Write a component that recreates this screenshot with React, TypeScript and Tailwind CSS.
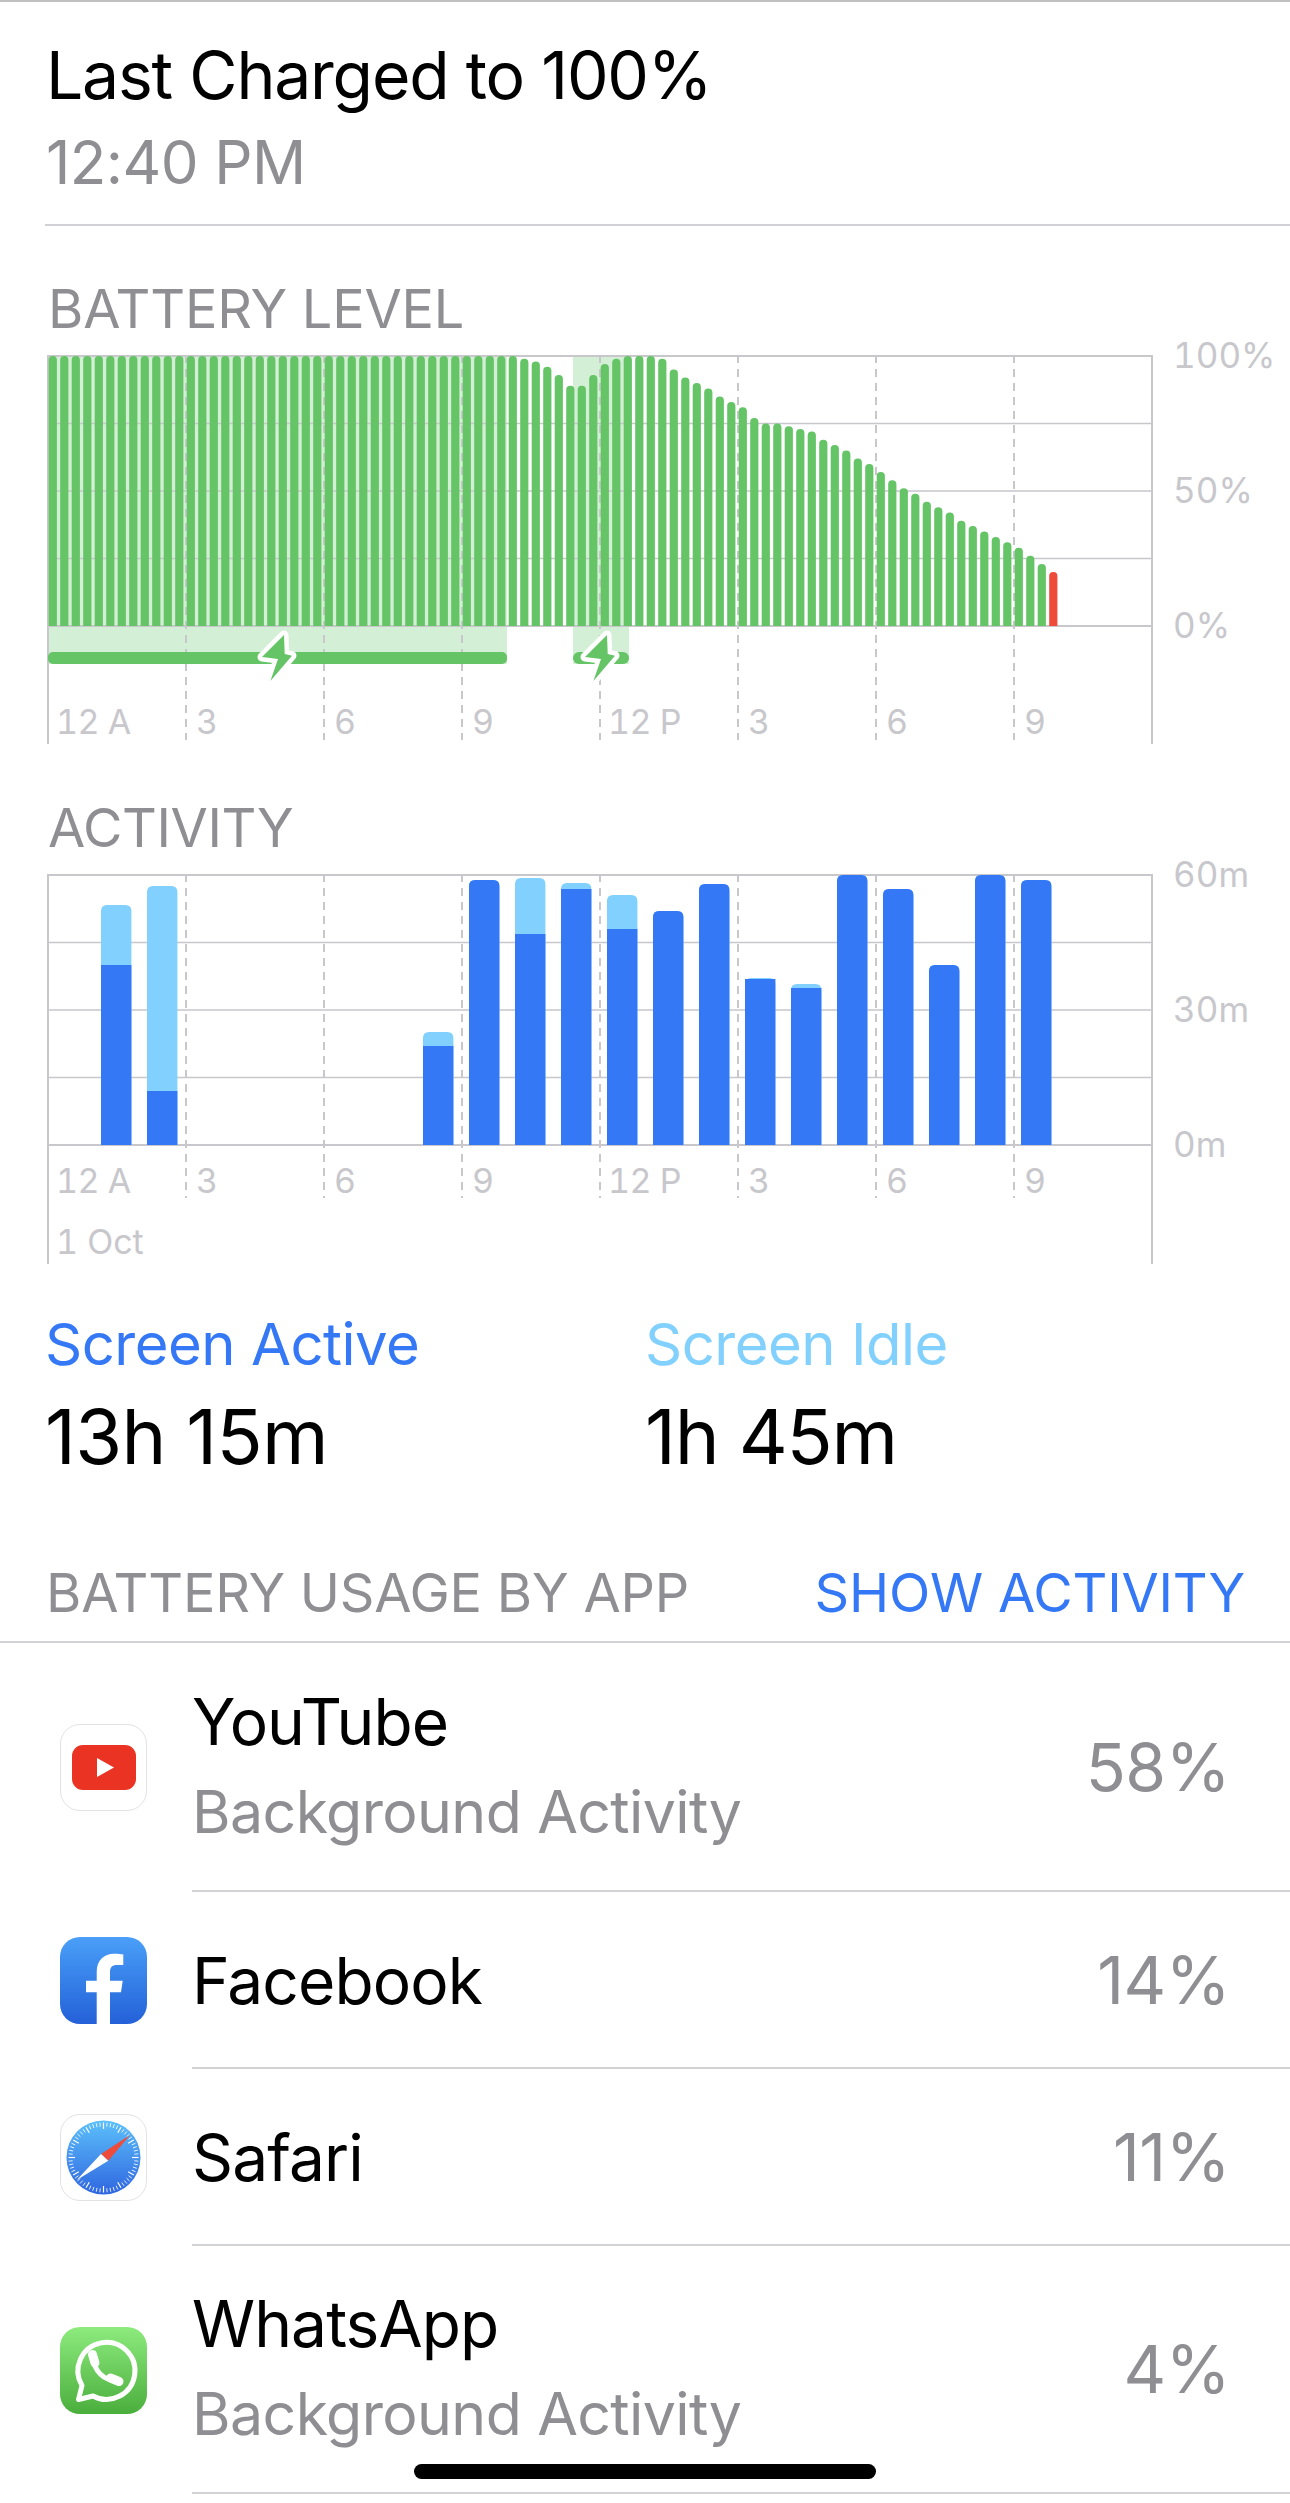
import React from 'react';

const LINE = '#c7c7cc';
const GREEN = '#65c466';

// battery level per 15 min slot, the first 41 slots sit at 100%
const LEVELS = [
  ...Array(41).fill(100),
  99, 98, 96, 93, 89, 89, 93, 97, 99, 100, 100, 100, 99, 95, 92, 90, 88, 85, 83, 81, 77, 75, 75, 74, 73, 72,
  69, 67, 65, 62, 60, 57, 54, 51, 49, 46, 44, 42, 39, 37, 35, 33, 31, 29, 26, 23, 20,
];

// hour, total height, active height (px of a 270px plot)
const ACTIVITY = [
  [1, 240, 180], [2, 259, 54], [8, 113, 99], [9, 265, 265], [10, 267, 211], [11, 262, 256], [12, 250, 216],
  [13, 234, 234], [14, 261, 261], [15, 167, 166], [16, 161, 157], [17, 270, 270], [18, 256, 256], [19, 180, 180],
  [20, 270, 270], [21, 265, 265],
];

const topBar = (x: number, top: number, bottom: number, w: number, r: number) =>
  `M${x} ${bottom}V${top + r}Q${x} ${top} ${x + r} ${top}H${x + w - r}Q${x + w} ${top} ${x + w} ${top + r}V${bottom}Z`;

const Grid: React.FC<{ bottom: number; dashEnd: number }> = ({ bottom, dashEnd }) => (
  <>
    {[0, 67.5, 135, 202.5, 270].map((y) => (
      <line key={y} x1={0} x2={1104} y1={y + 1} y2={y + 1} stroke={LINE} strokeWidth={y === 0 || y === 270 ? 2 : 1.5} />
    ))}
    {[138, 276, 414, 552, 690, 828, 966].map((x) => (
      <line key={x} x1={x + 1} x2={x + 1} y1={0} y2={dashEnd} stroke={LINE} strokeWidth={2} strokeDasharray="8 6" />
    ))}
    <line x1={1} x2={1} y1={0} y2={bottom} stroke={LINE} strokeWidth={2} />
    <line x1={1105} x2={1105} y1={0} y2={bottom} stroke={LINE} strokeWidth={2} />
  </>
);

const Bolt: React.FC<{ dx: number }> = ({ dx }) => (
  <path
    transform={`translate(${dx} 0)`}
    d="M237 280 L215 302 L231 304 L223.400 326 L245 300.700 L237.700 299 Z"
    fill={GREEN}
    stroke="#ffffff"
    strokeWidth={9}
    strokeLinejoin="round"
    paintOrder="stroke"
  />
);

const BatteryPlot = () => (
  <svg width={1106} height={390} viewBox="0 0 1106 390" className="block">
    <path d="M1 0H460V309H1Z" fill="#d3efd6" />
    <path d="M526 0H582V309H526Z" fill="#d3efd6" />
    <Grid bottom={389} dashEnd={385} />
    {LEVELS.map((level, i) => {
      const top = 271 - level * 2.7;
      return (
        <path key={i} d={topBar(1.7 + i * 11.5, top, 271, 8.2, 4)} fill={i === LEVELS.length - 1 ? '#ef4b3a' : GREEN} />
      );
    })}
    <rect x={1} y={297} width={459} height={12} rx={5} fill={GREEN} />
    <rect x={526} y={297} width={56} height={12} rx={6} fill={GREEN} />
    <Bolt dx={0} />
    <Bolt dx={323} />
  </svg>
);

const ActivityPlot = () => (
  <svg width={1106} height={390} viewBox="0 0 1106 390" className="block">
    <Grid bottom={390} dashEnd={324} />
    {ACTIVITY.map(([h, total, active]) => {
      const x = 8 + h * 46;
      return (
        <g key={h}>
          <path d={topBar(x, 271 - total, 271, 30.4, 6)} fill="#81d0fe" />
          {active === total ? (
            <path d={topBar(x, 271 - total, 271, 30.4, 6)} fill="#3478f6" />
          ) : (
            <rect x={x} y={271 - active} width={30.4} height={active} fill="#3478f6" />
          )}
        </g>
      );
    })}
  </svg>
);

const XLabels: React.FC<{ className: string }> = ({ className }) => (
  <div className={`absolute left-0 grid grid-cols-[repeat(8,138px)] text-[34px] leading-[40px] tracking-[-0.5px] tabular-nums text-[#c7c7cc] ${className}`}>
    {['12 A', '3', '6', '9', '12 P', '3', '6', '9'].map((label, i) => (
      <span key={i} className={i === 0 || i === 4 ? 'pl-[9px]' : 'pl-[11px]'}>
        {label}
      </span>
    ))}
  </div>
);

const YLabels: React.FC<{ labels: string[] }> = ({ labels }) => (
  <div className="ml-[20px] flex h-[270px] flex-col justify-between text-[35px] tabular-nums text-[#c7c7cc]">
    {labels.map((label) => (
      <span key={label} className="flex h-0 items-center leading-none">
        {label}
      </span>
    ))}
  </div>
);

const YouTubeIcon = () => (
  <div className="flex h-[87px] w-[87px] items-center justify-center rounded-[20px] border border-[#e2e2e2] bg-white">
    <svg width={64} height={45} viewBox="0 0 64 45">
      <rect width={64} height={45} rx={11} fill="#ea3323" />
      <path d="M25 13V32L42 22.500Z" fill="#fff" />
    </svg>
  </div>
);

const FacebookIcon = () => (
  <div className="h-[87px] w-[87px] overflow-hidden rounded-[20px] bg-gradient-to-b from-[#4a9ff8] to-[#2560d8]">
    <svg width={87} height={87} viewBox="0 0 87 87">
      <path
        d="M36.700 87V55.300H26V43.700H36.700V35C36.700 23 44 16.700 54 16.700C58 16.700 61.500 17 63.300 17.500V28H57C52 28 50 30.500 50 35V43.700H62.700L61 55.300H50V87Z"
        fill="#fff"
      />
    </svg>
  </div>
);

const SafariIcon = () => (
  <div className="h-[87px] w-[87px] rounded-[20px] border border-[#e2e2e2] bg-white">
    <svg width={85} height={85} viewBox="0 0 85 85">
      <defs>
        <linearGradient id="safari" x1="0" y1="0" x2="0" y2="1">
          <stop offset="0" stopColor="#5cc0fa" />
          <stop offset="1" stopColor="#2f66e0" />
        </linearGradient>
      </defs>
      <circle cx={42.5} cy={42.5} r={37} fill="url(#safari)" />
      {Array.from({ length: 60 }).map((_, i) => (
        <line
          key={i}
          x1={42.5}
          x2={42.5}
          y1={7.500}
          y2={i % 5 === 0 ? 14 : 11.500}
          stroke="#fff"
          strokeWidth={i % 5 === 0 ? 1.200 : 0.800}
          transform={`rotate(${i * 6} 42.500 42.500)`}
        />
      ))}
      <path d="M69 20L47.300 45.700L40 39Z" fill="#ef4b3a" />
      <path d="M15.700 65L40 39L47.300 45.700Z" fill="#fff" />
    </svg>
  </div>
);

const WhatsAppIcon = () => (
  <div className="h-[87px] w-[87px] overflow-hidden rounded-[20px] bg-gradient-to-b from-[#8ceb7c] to-[#4aae3c]">
    <svg width={87} height={87} viewBox="0 0 87 87" fill="none">
      <path
        d="M22 58.500A28.500 28.500 0 1 1 33 69L18.500 72.500L22 58.500Z"
        stroke="#fff"
        strokeWidth={5}
        strokeLinejoin="round"
      />
      <path d="M34 32C34 44 44 53.500 56 53.500" stroke="#fff" strokeWidth={5} strokeLinecap="round" />
      <path d="M32.500 27.500L35 36M50.500 51L59 54.500" stroke="#fff" strokeWidth={9} strokeLinecap="round" />
    </svg>
  </div>
);

const AppRow: React.FC<{
  icon: React.ReactNode;
  name: string;
  sub?: boolean;
  percent: string;
  height: string;
}> = ({ icon, name, sub, percent, height }) => (
  <div className={`flex ${height}`}>
    <div className="flex w-[192px] shrink-0 items-center pl-[60px]">{icon}</div>
    <div className="flex flex-1 items-center justify-between border-b-2 border-[#d1d1d6] pr-[60px]">
      <div className={sub ? '' : 'pt-[2px]'}>
        <div className="text-[64px] leading-[90px] tracking-[-0.9px] text-black">{name}</div>
        {sub && <div className="text-[59px] leading-[90px] tracking-[-0.6px] text-[#8e8e93]">Background Activity</div>}
      </div>
      <div className="text-[66px] leading-[90px] tracking-[-0.5px] text-[#8e8e93]">{percent}</div>
    </div>
  </div>
);

export default function App() {
  return (
    <div className="relative h-[2503px] w-[1290px] overflow-hidden bg-white font-['Inter',sans-serif]">
      {/* Last charged */}
      <div className="border-t-2 border-[#c0c0c0] pl-[45px]">
        <div className="h-[224px] border-b-2 border-[#d1d1d6] pl-[1px] pt-[28px]">
          <div className="text-[66px] leading-[90px] tracking-[-1.2px] text-black">Last Charged to 100%</div>
          <div className="text-[60px] leading-[84px] tracking-[-0.6px] text-[#8e8e93]">12:40 PM</div>
        </div>
      </div>

      {/* Battery level */}
      <div className="flex h-[129px] items-end pb-[16px] pl-[48px] text-[54px] leading-[60px] tracking-[-0.2px] text-[#8e8e93]">BATTERY LEVEL</div>
      <div className="flex pl-[47px]">
        <div className="relative h-[390px] w-[1106px]">
          <BatteryPlot />
          <XLabels className="top-[347px]" />
        </div>
        <YLabels labels={['100%', '50%', '0%']} />
      </div>

      {/* Activity */}
      <div className="flex h-[129px] items-end pb-[16px] pl-[48px] text-[54px] leading-[60px] tracking-[-0.4px] text-[#8e8e93]">ACTIVITY</div>
      <div className="flex pl-[47px]">
        <div className="relative h-[390px] w-[1106px]">
          <ActivityPlot />
          <XLabels className="top-[287px]" />
          <span className="absolute left-[9px] top-[348px] text-[34px] leading-[40px] tabular-nums text-[#c7c7cc]">1 Oct</span>
        </div>
        <YLabels labels={['60m', '30m', '0m']} />
      </div>

      {/* Screen totals */}
      <div className="flex pl-[45px] pt-[38px]">
        <div className="w-[600px]">
          <div className="text-[58px] leading-[84px] tracking-[-0.5px] text-[#3478f6]">Screen Active</div>
          <div className="text-[76px] leading-[100px] tracking-[-0.7px] text-black">13h 15m</div>
        </div>
        <div>
          <div className="text-[58px] leading-[84px] tracking-[-0.5px] text-[#81d0fe]">Screen Idle</div>
          <div className="text-[76px] leading-[100px] tracking-[-1.2px] text-black">1h 45m</div>
        </div>
      </div>

      {/* Usage list */}
      <div className="flex h-[155px] items-center justify-between pl-[46px] pr-[45px] pt-[58px] text-[54px] leading-[60px] tracking-[-0.2px]">
        <span className="text-[#8e8e93]">BATTERY USAGE BY APP</span>
        <span className="text-[#3478f6]">SHOW ACTIVITY</span>
      </div>
      <div className="border-t-2 border-[#d1d1d6]">
        <AppRow icon={<YouTubeIcon />} name="YouTube" sub percent="58%" height="h-[249px]" />
        <AppRow icon={<FacebookIcon />} name="Facebook" percent="14%" height="h-[177px]" />
        <AppRow icon={<SafariIcon />} name="Safari" percent="11%" height="h-[177px]" />
        <AppRow icon={<WhatsAppIcon />} name="WhatsApp" sub percent="4%" height="h-[248px]" />
      </div>

      {/* Home indicator */}
      <div className="absolute left-[414px] top-[2464px] h-[15px] w-[462px] rounded-full bg-black" />
    </div>
  );
}
